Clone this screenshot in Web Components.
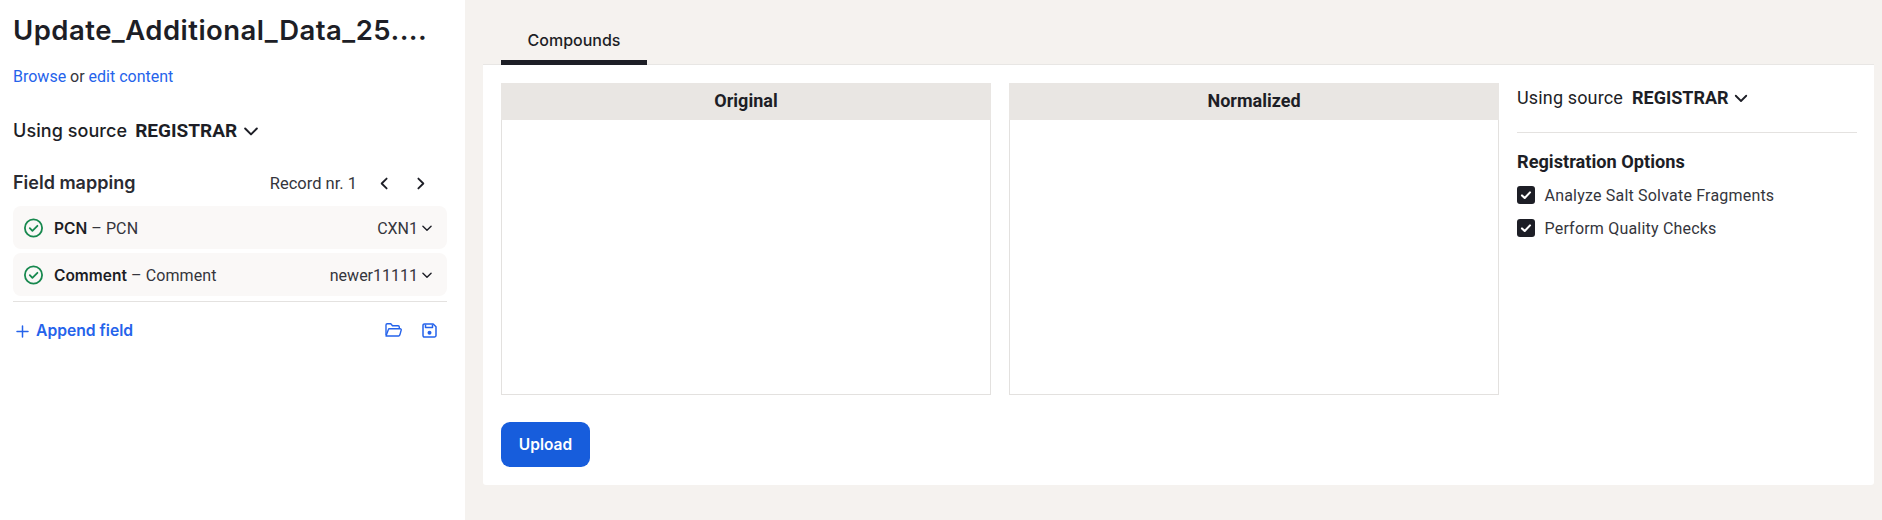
<!DOCTYPE html>
<html>
<head>
<meta charset="utf-8">
<style>
    html, body { margin: 0; height: 100%; }
    body { font-family: Roboto, "Liberation Sans", sans-serif; color: #1d1e26; background: #f5f2ef; }
</style>
</head>
<body>
<upload-page></upload-page>

<script>
const chevronDown = (size, width = 2) => `<svg width="${size}" height="${size}" viewBox="0 0 24 24" fill="none" stroke="currentColor" stroke-width="${width}" stroke-linecap="round" stroke-linejoin="round"><path d="M5 9l7 7 7-7"/></svg>`

class SourcePicker extends HTMLElement {
    constructor() {
        super()
        this.attachShadow({ mode: "open" })
        this.shadowRoot.innerHTML = `
            <style>
                :host { display: flex; align-items: center; font-size: 18px; line-height: 24px; letter-spacing: .15px; }
                .label { margin-right: 9px; }
                b { font-weight: 700; letter-spacing: 0; }
                svg { margin-left: 3px; width: 18px; height: 18px; }
                :host([strong]) .label { font-family: Inter, sans-serif; font-weight: 500; letter-spacing: .07px; margin-right: 8px; }
                :host([strong]) b { font-size: 19px; }
                :host([strong]) svg { width: 20px; height: 20px; margin-left: 4px; }
            </style>
            <span class="label">Using source</span>
            <b>REGISTRAR</b>
            ${chevronDown(18, 2.4)}
        `
    }
}
customElements.define("source-picker", SourcePicker)

class MappingRow extends HTMLElement {
    constructor() {
        super()
        this.attachShadow({ mode: "open" })
        const name = this.getAttribute("name")
        const value = this.getAttribute("value")
        this.shadowRoot.innerHTML = `
            <style>
                :host {
                    display: flex; align-items: center; height: 43px; box-sizing: border-box;
                    padding: 1px 13px 0 11px; background: #faf8f7; border-radius: 8px;
                    font-size: 16px; color: #34353c;
                }
                svg.ok { margin-right: 10px; flex: none; margin-top: -1px; }
                b { font-family: Inter, sans-serif; font-size: 15.5px; font-weight: 600; color: #1d1e26; letter-spacing: 0; }
                .grow { flex: 1; white-space: pre; letter-spacing: .1px; }
                .chev { margin-left: 2px; color: #1d1e26; }
            </style>
            <svg class="ok" width="20" height="20" viewBox="0 0 20 20" fill="none" stroke="#17884e" stroke-width="1.8" stroke-linecap="round" stroke-linejoin="round"><circle cx="9.5" cy="10" r="8.6"/><path d="M5.8 10.2l2.6 2.6 5-5"/></svg>
            <span class="grow"><b>${name}</b> – ${name}</span>
            <span>${value}</span>
            <svg class="chev" width="14" height="14" viewBox="0 0 24 24" fill="none" stroke="currentColor" stroke-width="2.4" stroke-linecap="round" stroke-linejoin="round"><path d="M5 9l7 7 7-7"/></svg>
        `
    }
}
customElements.define("mapping-row", MappingRow)

class SideBar extends HTMLElement {
    constructor() {
        super()
        this.attachShadow({ mode: "open" })
        this.shadowRoot.innerHTML = `
            <style>
                :host { display: block; width: 465px; flex: none; box-sizing: border-box; background: #fff; padding: 12px 18px 0 13px; }
                h1 { margin: 0; font: 600 27.5px/36px Inter, sans-serif; letter-spacing: 0.47px; white-space: nowrap; }
                .links { margin-top: 18px; font-size: 16px; line-height: 22px; color: #34353c; }
                a { color: #2563eb; text-decoration: none; }
                source-picker { margin-top: 31px; }
                .head { display: flex; align-items: center; margin-top: 25px; height: 30px; }
                h2 { flex: 1; margin: 0; font: 600 18px/24px Inter, sans-serif; color: #2a2b32; }
                .rec { font-size: 16.5px; color: #34353c; margin-right: 19px; }
                .nav { display: flex; gap: 19px; margin-right: 18px; }
                .rows { display: flex; flex-direction: column; gap: 4px; margin-top: 8px; }
                hr { border: 0; border-top: 1px solid #e4e2e0; margin: 5px 0 0; }
                .foot { display: flex; align-items: center; margin-top: 18px; height: 22px; color: #2563eb; }
                .add { flex: 1; display: flex; align-items: center; font: 600 15.7px/22px Inter, sans-serif; }
                .add svg { margin: 0 7px 0 3px; }
                .foot-icons { display: flex; align-items: center; gap: 20px; margin: 0 10px 2px 0; }
            </style>
            <h1>Update_Additional_Data_25....</h1>
            <div class="links"><a>Browse</a> or <a>edit content</a></div>
            <source-picker strong></source-picker>
            <div class="head">
                <h2>Field mapping</h2>
                <span class="rec">Record nr. 1</span>
                <div class="nav">
                    <svg width="17" height="17" viewBox="0 0 24 24" fill="none" stroke="#1d1e26" stroke-width="2.6" stroke-linecap="round" stroke-linejoin="round"><path d="M15 5l-7 7 7 7"/></svg>
                    <svg width="17" height="17" viewBox="0 0 24 24" fill="none" stroke="#1d1e26" stroke-width="2.6" stroke-linecap="round" stroke-linejoin="round"><path d="M9 5l7 7-7 7"/></svg>
                </div>
            </div>
            <div class="rows">
                <mapping-row name="PCN" value="CXN1"></mapping-row>
                <mapping-row name="Comment" value="newer11111"></mapping-row>
            </div>
            <hr>
            <div class="foot">
                <span class="add">
                    <svg width="13" height="13" viewBox="0 0 13 13" fill="none" stroke="currentColor" stroke-width="1.5" stroke-linecap="round"><path d="M6.5 1v11M1 6.5h11"/></svg>
                    Append field
                </span>
                <div class="foot-icons">
                    <svg width="17" height="14" viewBox="0 0 17 14" fill="none" stroke="currentColor" stroke-width="1.4" stroke-linejoin="round"><path d="M1 12V2c0-.6.5-1.2 1.2-1.2h3.6l1.700 2h5.600c.7 0 1.200.5 1.200 1.200v1.500"/><path d="M1 13l2.400-6.500c.1-.5.6-.8 1.100-.8h10.600c.8 0 1.300.7 1.100 1.400l-1.400 5c-.2.500-.6.900-1.100.900H1z"/></svg>
                    <svg width="15" height="15" viewBox="0 0 15 15" fill="none" stroke="currentColor" stroke-width="1.5" stroke-linejoin="round"><path d="M1 2.4C1 1.6 1.6 1 2.4 1h8.800L14 3.800v8.800c0 .8-.6 1.400-1.400 1.400H2.400C1.600 14 1 13.400 1 12.600z"/><path d="M3.500 1.500v3h7v-3"/><circle cx="7.500" cy="9.800" r="2" fill="currentColor" stroke="none"/></svg>
                </div>
            </div>
        `
    }
}
customElements.define("side-bar", SideBar)

class ViewerBox extends HTMLElement {
    constructor() {
        super()
        this.attachShadow({ mode: "open" })
        this.shadowRoot.innerHTML = `
            <style>
                :host { display: flex; flex-direction: column; width: 490px; height: 312px; box-sizing: border-box; border: 1px solid #e3e1df; border-top: 0; }
                .title { margin: 0 -1px; height: 37px; background: #e9e6e3; text-align: center; font-size: 18px; font-weight: 700; line-height: 36px; }
            </style>
            <div class="title"><slot></slot></div>
        `
    }
}
customElements.define("viewer-box", ViewerBox)

class OptionCheck extends HTMLElement {
    constructor() {
        super()
        this.attachShadow({ mode: "open" })
        this.shadowRoot.innerHTML = `
            <style>
                :host { display: flex; align-items: center; height: 24px; font-size: 16px; letter-spacing: 0.2px; color: #34353c; }
                .box { width: 18px; height: 18px; margin-right: 9.5px; border-radius: 3px; background: #1d1e26; display: flex; align-items: center; justify-content: center; }
            </style>
            <span class="box"><svg width="12" height="12" viewBox="0 0 12 12" fill="none" stroke="#fff" stroke-width="2.1" stroke-linecap="round" stroke-linejoin="round"><path d="M2 6.4l2.7 2.6L10 3.4"/></svg></span>
            <slot></slot>
        `
    }
}
customElements.define("option-check", OptionCheck)

class OptionsPanel extends HTMLElement {
    constructor() {
        super()
        this.attachShadow({ mode: "open" })
        this.shadowRoot.innerHTML = `
            <style>
                :host { display: block; width: 340px; flex: none; }
                source-picker { height: 30px; }
                hr { border: 0; border-top: 1px solid #e4e2e0; margin: 19px 0 0; }
                h3 { margin: 17px 0 9px; font-size: 18.2px; line-height: 24px; font-weight: 700; }
                .list { display: flex; flex-direction: column; gap: 9px; }
            </style>
            <source-picker></source-picker>
            <hr>
            <h3>Registration Options</h3>
            <div class="list">
                <option-check>Analyze Salt Solvate Fragments</option-check>
                <option-check>Perform Quality Checks</option-check>
            </div>
        `
    }
}
customElements.define("options-panel", OptionsPanel)

class UploadPage extends HTMLElement {
    constructor() {
        super()
        this.attachShadow({ mode: "open" })
        this.shadowRoot.innerHTML = `
            <style>
                :host { display: flex; height: 520px; overflow: hidden; }
                main { flex: 1; padding: 0 8px 0 18px; }
                .tabs { height: 64px; padding-left: 18px; }
                .tab { width: 146px; height: 65px; position: relative; box-sizing: border-box; border-bottom: 5px solid #1d1e26; text-align: center; font: 500 16px/20px Inter, Roboto, sans-serif; padding-top: 30px; }
                .panel { height: 421px; box-sizing: border-box; background: #fff; border-top: 1px solid #e8e6e4; border-radius: 0 0 3px 3px; padding: 18px 17px 0 18px; }
                .cols { display: flex; }
                viewer-box + viewer-box { margin-left: 18px; }
                options-panel { margin-left: 18px; }
                button { display: block; margin-top: 27px; width: 89px; height: 45px; border: 0; border-radius: 9px; background: #175ddc; color: #fff; font: 600 15.5px Inter, sans-serif; padding: 0; }
            </style>
            <side-bar></side-bar>
            <main>
                <div class="tabs"><div class="tab">Compounds</div></div>
                <div class="panel">
                    <div class="cols">
                        <viewer-box>Original</viewer-box>
                        <viewer-box>Normalized</viewer-box>
                        <options-panel></options-panel>
                    </div>
                    <button type="button">Upload</button>
                </div>
            </main>
        `
    }
}
customElements.define("upload-page", UploadPage)
</script>
</body>
</html>
